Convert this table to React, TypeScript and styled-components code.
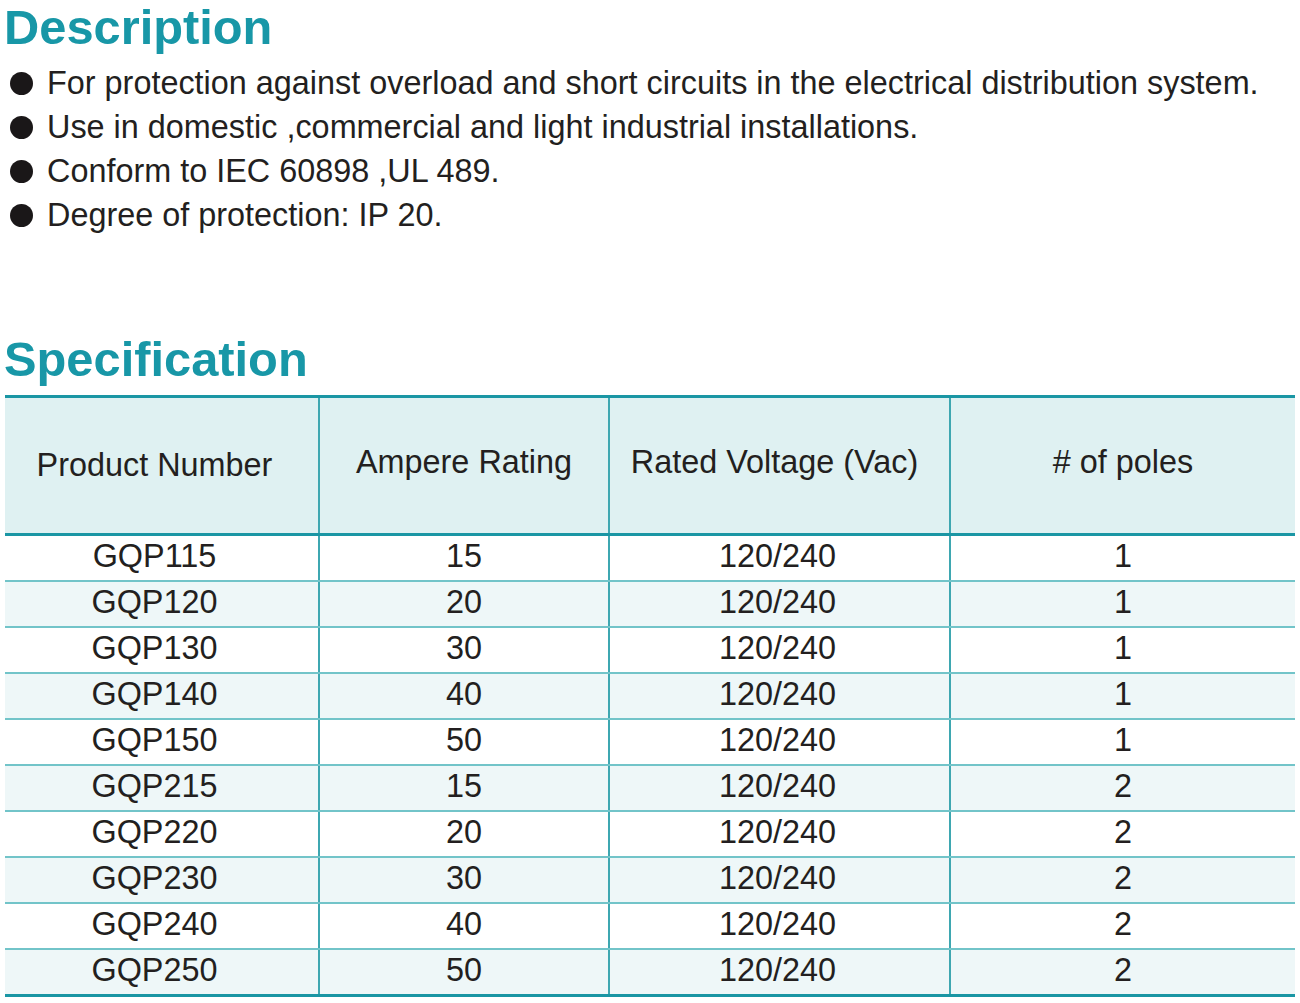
import styled, { createGlobalStyle } from 'styled-components';

const GlobalStyle = createGlobalStyle`
	body {
		margin: 0;
		background: #ffffff;
		font-family: 'Liberation Sans', Arial, sans-serif;
		color: #231f20;
	}
`;

const Page = styled.div`
	width: 1300px;
	padding: 3px 0 0 0;
`;

const Heading = styled.h2<{ $top?: number }>`
	margin: ${(p) => p.$top ?? 0}px 0 0 4px;
	font-size: 48.8px;
	line-height: 48px;
	font-weight: 700;
	color: #1897a7;
`;

const BulletList = styled.ul`
	list-style: none;
	margin: 10px 0 0 0;
	padding: 0;
`;

const Bullet = styled.li`
	display: flex;
	align-items: center;
	height: 44px;
	font-size: 32.4px;
	line-height: 44px;

	&::before {
		content: '';
		width: 23px;
		height: 23px;
		border-radius: 50%;
		background: #1a1718;
		margin: 0 14px 0 10px;
		flex-shrink: 0;
	}
`;

const Table = styled.div`
	margin: 12px 0 0 5px;
	width: 1290px;
	border-top: 3px solid #1a96a4;
	border-bottom: 3px solid #1a96a4;
`;

const Row = styled.div<{ $head?: boolean; $shade?: boolean; $last?: boolean }>`
	display: grid;
	grid-template-columns: 313px 290px 341px 1fr;
	height: ${(p) => (p.$head ? 135 : 44)}px;
	background: ${(p) => (p.$head ? '#dff1f2' : p.$shade ? '#eef7f8' : '#ffffff')};
	border-bottom: ${(p) =>
		p.$head ? '3px solid #1a96a4' : p.$last ? 'none' : '2px solid #72c4c9'};
`;

const Cell = styled.div<{ $first?: boolean; $lift?: number; $shift?: number }>`
	display: flex;
	align-items: center;
	justify-content: center;
	font-size: 32.4px;
	padding-right: ${(p) => p.$shift ?? 0}px;
	padding-bottom: ${(p) => p.$lift ?? 0}px;
	border-left: ${(p) => (p.$first ? 'none' : '2px solid #3ea7b1')};
	white-space: nowrap;
`;

const bullets = [
	'For protection against overload and short circuits in the electrical distribution system.',
	'Use in domestic ,commercial and light industrial installations.',
	'Conform to IEC 60898 ,UL 489.',
	'Degree of protection: IP 20.',
];

const head = ['Product Number', 'Ampere Rating', 'Rated Voltage (Vac)', '# of poles'];
const headShift = [14, 0, 10, 0];
const bodyShift = [14, 0, 4, 0];

const rows = [
	['GQP115', '15', '120/240', '1'],
	['GQP120', '20', '120/240', '1'],
	['GQP130', '30', '120/240', '1'],
	['GQP140', '40', '120/240', '1'],
	['GQP150', '50', '120/240', '1'],
	['GQP215', '15', '120/240', '2'],
	['GQP220', '20', '120/240', '2'],
	['GQP230', '30', '120/240', '2'],
	['GQP240', '40', '120/240', '2'],
	['GQP250', '50', '120/240', '2'],
];

export default function App() {
	return (
		<Page>
			<GlobalStyle />
			<Heading>Description</Heading>
			<BulletList>
				{bullets.map((b) => (
					<Bullet key={b}>{b}</Bullet>
				))}
			</BulletList>
			<Heading $top={98}>Specification</Heading>
			<Table>
				<Row $head>
					{head.map((h, i) => (
						<Cell key={h} $first={i === 0} $lift={i === 0 ? 0 : 6} $shift={headShift[i]}>
							{h}
						</Cell>
					))}
				</Row>
				{rows.map((r, ri) => (
					<Row key={r[0]} $shade={ri % 2 === 1} $last={ri === rows.length - 1}>
						{r.map((c, i) => (
							<Cell key={i} $first={i === 0} $lift={3} $shift={bodyShift[i]}>
								{c}
							</Cell>
						))}
					</Row>
				))}
			</Table>
		</Page>
	);
}
